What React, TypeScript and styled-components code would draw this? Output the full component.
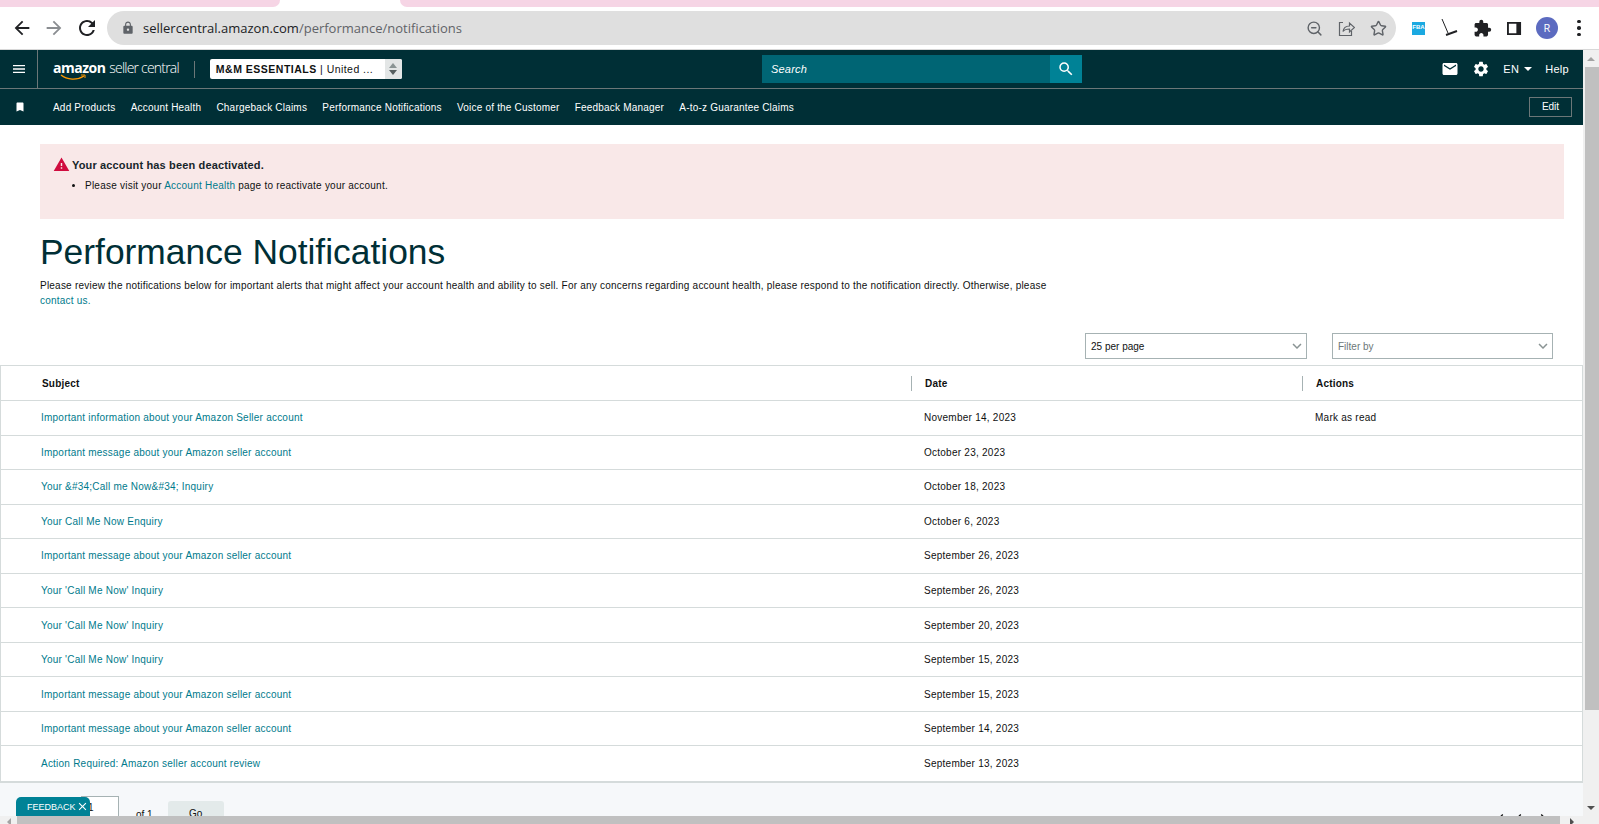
import styled, { createGlobalStyle } from "styled-components";
import { MdArrowBack, MdArrowForward, MdRefresh, MdLock, MdExtension, MdEmail, MdSettings, MdMenu, MdBookmark, MdSearch, MdWarning, MdKeyboardArrowDown, MdClose, MdChevronLeft, MdChevronRight } from "react-icons/md";
import { LuZoomOut, LuStar } from "react-icons/lu";

const rows = [
  ["Important information about your Amazon Seller account", "November 14, 2023", "Mark as read"],
  ["Important message about your Amazon seller account", "October 23, 2023", ""],
  ["Your &#34;Call me Now&#34; Inquiry", "October 18, 2023", ""],
  ["Your Call Me Now Enquiry", "October 6, 2023", ""],
  ["Important message about your Amazon seller account", "September 26, 2023", ""],
  ["Your 'Call Me Now' Inquiry", "September 26, 2023", ""],
  ["Your 'Call Me Now' Inquiry", "September 20, 2023", ""],
  ["Your 'Call Me Now' Inquiry", "September 15, 2023", ""],
  ["Important message about your Amazon seller account", "September 15, 2023", ""],
  ["Important message about your Amazon seller account", "September 14, 2023", ""],
  ["Action Required: Amazon seller account review", "September 13, 2023", ""],
];

const shortcuts = [
  "Add Products",
  "Account Health",
  "Chargeback Claims",
  "Performance Notifications",
  "Voice of the Customer",
  "Feedback Manager",
  "A-to-z Guarantee Claims",
];

const App = () => {
  return (
    <>
      <GlobalStyle />
      <Window>
        <TabStrip>
          <TabPink $width="280px" $side="right" />
          <TabGap />
          <TabPink $width="auto" $side="left" />
        </TabStrip>
        <BrowserBar>
          <BrowserNav>
            <MdArrowBack size={22} color="#202124" />
            <MdArrowForward size={22} color="#8a8d91" />
            <MdRefresh size={24} color="#202124" />
          </BrowserNav>
          <Omnibox>
            <MdLock size={14} color="#5f6368" />
            <Url>
              sellercentral.amazon.com<UrlPath>/performance/notifications</UrlPath>
            </Url>
            <OmniIcons>
              <LuZoomOut size={17} color="#5f6368" />
              <svg width="17" height="17" viewBox="0 0 17 17" fill="none" stroke="#5f6368" strokeWidth="1.2">
                <path d="M5 2.5H1.5v13h12V11" />
                <path d="M5 11.5c.5-3.5 3-5.5 6.5-5.5V3l5 4.5-5 4.5V9c-2.5 0-5 .5-6.5 2.5z" />
              </svg>
              <LuStar size={17} color="#5f6368" />
            </OmniIcons>
          </Omnibox>
          <Extensions>
            <FbaLogo>FBA</FbaLogo>
            <svg width="18" height="20" viewBox="0 0 18 20" fill="none" stroke="#202124">
              <path d="M2 1l6 14" strokeWidth="1" />
              <path d="M6 17l11-4" strokeWidth="2" />
            </svg>
            <MdExtension size={19} color="#202124" />
            <svg width="15" height="15" viewBox="0 0 16 16">
              <path fill="#202124" fillRule="evenodd" d="M0 1h15v14H0zM2 3v10h8V3z" />
            </svg>
            <Avatar>R</Avatar>
            <Kebab>
              <i />
              <i />
              <i />
            </Kebab>
          </Extensions>
        </BrowserBar>
        <Viewport>
          <Scroller>
            <Page>
              <TopNav>
                <NavMain>
                  <MenuCell>
                    <MdMenu size={16} color="#fff" />
                  </MenuCell>
                  <Logo>
                    <LogoWord>amazon</LogoWord>
                    <LogoSub>seller central</LogoSub>
                    <Smile width="26" height="7" viewBox="0 0 26 7" fill="none">
                      <path d="M1 1c6 5 16 5.500 23 1" stroke="#f90" strokeWidth="1.300" />
                      <path d="M21 1h4v3" stroke="#f90" strokeWidth="1" />
                    </Smile>
                  </Logo>
                  <LogoRule />
                  <AccountSelect>
                    <b>M&amp;M ESSENTIALS</b> | United ...
                    <Stepper>
                      <span />
                      <span />
                    </Stepper>
                  </AccountSelect>
                  <SearchBox>
                    <SearchLabel>Search</SearchLabel>
                    <SearchButton>
                      <MdSearch size={18} color="#fff" />
                    </SearchButton>
                  </SearchBox>
                  <NavRight>
                    <MdEmail size={18} color="#fff" />
                    <MdSettings size={18} color="#fff" />
                    <NavText>
                      EN <Caret />
                    </NavText>
                    <NavText>Help</NavText>
                  </NavRight>
                </NavMain>
                <NavShortcuts>
                  <MdBookmark size={12} color="#fff" />
                  <ShortcutList>
                    {shortcuts.map((name) => (
                      <Shortcut key={name}>{name}</Shortcut>
                    ))}
                  </ShortcutList>
                  <EditButton>Edit</EditButton>
                </NavShortcuts>
              </TopNav>
              <Content>
                <Alert>
                  <AlertTitle>
                    <MdWarning size={17} color="#d00c3f" />
                    Your account has been deactivated.
                  </AlertTitle>
                  <AlertList>
                    <li>
                      Please visit your <TextLink>Account Health</TextLink> page to reactivate your account.
                    </li>
                  </AlertList>
                </Alert>
                <Title>Performance Notifications</Title>
                <Intro>
                  Please review the notifications below for important alerts that might affect your account health and ability to sell. For any concerns regarding account health, please respond to the notification directly. Otherwise, please <TextLink>contact us.</TextLink>
                </Intro>
              </Content>
              <Filters>
                <SelectBox $width="222px">
                  25 per page
                  <MdKeyboardArrowDown size={18} color="#8a9494" />
                </SelectBox>
                <SelectBox $width="221px" $muted>
                  Filter by
                  <MdKeyboardArrowDown size={18} color="#8a9494" />
                </SelectBox>
              </Filters>
              <Table>
                <HeadRow>
                  <HeadCell>Subject</HeadCell>
                  <HeadCell $divider>Date</HeadCell>
                  <HeadCell $divider>Actions</HeadCell>
                </HeadRow>
                {rows.map(([subject, date, action], i) => (
                  <Row key={i}>
                    <SubjectCell>{subject}</SubjectCell>
                    <Cell>{date}</Cell>
                    <Cell>{action}</Cell>
                  </Row>
                ))}
              </Table>
              <Pager>
                <PageInput>1</PageInput>
                <OfLabel>of 1</OfLabel>
                <GoButton>Go</GoButton>
                <PagerArrows>
                  <MdChevronLeft size={16} />
                  <MdChevronLeft size={16} />
                  <MdChevronRight size={16} />
                </PagerArrows>
              </Pager>
            </Page>
            <VerticalBar>
              <BarArrow $dir="up" />
              <VerticalThumb />
              <BarArrow $dir="down" />
            </VerticalBar>
          </Scroller>
          <HorizontalBar>
            <SideArrow $dir="left" />
            <HorizontalThumb />
            <SideArrow $dir="right" />
          </HorizontalBar>
          <Feedback>
            FEEDBACK
            <MdClose size={13} color="#fff" />
          </Feedback>
        </Viewport>
      </Window>
    </>
  );
};

const GlobalStyle = createGlobalStyle`
  html, body {
    margin: 0;
    height: 100%;
    overflow: hidden;
    background: #fff;
  }
  * {
    box-sizing: border-box;
  }
`;

const Window = styled.div`
  width: 1599px;
  height: 824px;
  display: flex;
  flex-direction: column;
  overflow: hidden;
  font-family: "Liberation Sans", Arial, sans-serif;
  color: #0f1111;
`;

const TabStrip = styled.div`
  display: flex;
  height: 7px;
  flex: none;
`;

const TabPink = styled.div<{ $width: string; $side: "left" | "right" }>`
  width: ${({ $width }) => $width};
  flex: ${({ $width }) => ($width === "auto" ? 1 : "none")};
  background: #f6d5e5;
  border-bottom-${({ $side }) => $side}-radius: 7px;
`;

const TabGap = styled.div`
  width: 120px;
`;

const BrowserBar = styled.div`
  height: 43px;
  flex: none;
  display: flex;
  align-items: flex-start;
  padding-top: 4px;
  border-bottom: 1px solid #d8d8d8;
`;

const BrowserNav = styled.div`
  width: 107px;
  height: 34px;
  flex: none;
  display: flex;
  align-items: center;
  gap: 10px;
  padding-left: 11px;
`;

const Omnibox = styled.div`
  width: 1289px;
  height: 34px;
  flex: none;
  display: flex;
  align-items: center;
  padding: 0 9px 0 14px;
  border-radius: 17px;
  background: #dfdfdf;
`;

const Url = styled.div`
  margin-left: 8px;
  font-family: "Open Sans", sans-serif;
  font-size: 13px;
  color: #202124;
`;

const UrlPath = styled.span`
  color: #5f6368;
`;

const OmniIcons = styled.div`
  margin-left: auto;
  display: flex;
  align-items: center;
  gap: 15px;
`;

const Extensions = styled.div`
  flex: 1;
  height: 34px;
  display: flex;
  align-items: center;
  gap: 15px;
  padding-left: 16px;
`;

const FbaLogo = styled.div`
  width: 13px;
  height: 13px;
  background: #1ba9e1;
  color: #fff;
  font-size: 6px;
  font-weight: bold;
  line-height: 10px;
  text-align: center;
`;

const Avatar = styled.div`
  width: 22px;
  height: 22px;
  flex: none;
  margin-left: -1px;
  border-radius: 50%;
  background: #5c6bc0;
  color: #fff;
  font-family: "Open Sans", sans-serif;
  font-size: 11px;
  line-height: 22px;
  text-align: center;
`;

const Kebab = styled.div`
  display: flex;
  flex-direction: column;
  gap: 3px;
  margin-left: 4px;
  i {
    width: 3.5px;
    height: 3.5px;
    border-radius: 50%;
    background: #202124;
  }
`;

const Viewport = styled.div`
  position: relative;
  flex: 1;
  min-height: 0;
  display: flex;
  flex-direction: column;
`;

const Scroller = styled.div`
  flex: 1;
  min-height: 0;
  display: flex;
`;

const Page = styled.div`
  width: 1583px;
  flex: none;
  overflow: hidden;
`;

const TopNav = styled.div`
  background: #002f36;
  color: #fff;
`;

const NavMain = styled.div`
  position: relative;
  height: 39px;
  display: flex;
  align-items: center;
  border-bottom: 1px solid #6c7778;
`;

const MenuCell = styled.div`
  width: 38px;
  height: 38px;
  flex: none;
  display: flex;
  align-items: center;
  justify-content: center;
  border-right: 1px solid #6c7778;
`;

const Logo = styled.div`
  position: relative;
  margin-left: 15px;
  display: flex;
  align-items: baseline;
  gap: 4px;
  margin-top: -4px;
`;

const LogoWord = styled.span`
  font-family: "Open Sans", sans-serif;
  font-size: 14px;
  font-weight: 700;
  letter-spacing: -0.5px;
`;

const LogoSub = styled.span`
  font-family: "Open Sans", sans-serif;
  font-size: 14px;
  font-weight: 300;
  letter-spacing: -0.8px;
`;

const Smile = styled.svg`
  position: absolute;
  left: 7px;
  top: 16px;
`;

const LogoRule = styled.div`
  width: 1px;
  height: 17px;
  margin-left: 15px;
  background: #6c7778;
`;

const AccountSelect = styled.div`
  position: relative;
  width: 192px;
  height: 20px;
  margin-left: 15px;
  padding-left: 6px;
  border-radius: 2px;
  background: #fff;
  color: #0f1111;
  font-size: 10.5px;
  line-height: 20px;
  letter-spacing: 0.45px;
  b {
    letter-spacing: 0.5px;
  }
`;

const Stepper = styled.div`
  position: absolute;
  right: 0;
  top: 0;
  width: 17px;
  height: 20px;
  display: flex;
  flex-direction: column;
  align-items: center;
  justify-content: center;
  gap: 2px;
  border-radius: 0 2px 2px 0;
  background: #e3e6e6;
  span {
    width: 0;
    height: 0;
    border-left: 4px solid transparent;
    border-right: 4px solid transparent;
  }
  span:first-child {
    border-bottom: 5px solid #8a9494;
  }
  span:last-child {
    border-top: 5px solid #565f60;
  }
`;

const SearchBox = styled.div`
  position: absolute;
  left: 762px;
  top: 5px;
  width: 320px;
  height: 28px;
  display: flex;
  align-items: center;
  padding-left: 9px;
  background: #006574;
`;

const SearchLabel = styled.span`
  flex: 1;
  font-size: 11px;
  font-style: italic;
  letter-spacing: 0.2px;
`;

const SearchButton = styled.div`
  width: 32px;
  height: 28px;
  display: flex;
  align-items: center;
  justify-content: center;
  background: #008296;
`;

const NavRight = styled.div`
  margin-left: auto;
  display: flex;
  align-items: center;
  gap: 13px;
  padding-right: 14px;
`;

const NavText = styled.div`
  display: flex;
  align-items: center;
  gap: 5px;
  font-size: 11px;
  letter-spacing: 0.3px;
`;

const Caret = styled.span`
  width: 0;
  height: 0;
  border-left: 4px solid transparent;
  border-right: 4px solid transparent;
  border-top: 4px solid #fff;
`;

const NavShortcuts = styled.div`
  height: 36px;
  display: flex;
  align-items: center;
  padding: 0 11px 0 14px;
`;

const ShortcutList = styled.div`
  flex: 1;
  display: flex;
  gap: 15.2px;
  margin-left: 27px;
`;

const Shortcut = styled.span`
  font-size: 10px;
  letter-spacing: 0.2px;
  white-space: nowrap;
`;

const EditButton = styled.div`
  width: 43px;
  height: 20px;
  border: 1px solid #6c7778;
  font-size: 10px;
  line-height: 18px;
  text-align: center;
`;

const Content = styled.div`
  padding: 19px 19px 0 40px;
`;

const Alert = styled.div`
  height: 75px;
  padding: 12px 13px;
  background: #f9e8e8;
`;

const AlertTitle = styled.div`
  display: flex;
  align-items: center;
  gap: 2px;
  font-size: 11px;
  font-weight: bold;
  letter-spacing: 0.15px;
  color: #16252a;
`;

const AlertList = styled.ul`
  margin: 5px 0 0;
  padding-left: 32px;
  font-size: 10px;
  line-height: 15px;
  letter-spacing: 0.23px;
`;

const TextLink = styled.span`
  color: #007a8c;
`;

const Title = styled.h1`
  margin: 12px 0 0;
  font-size: 35.4px;
  font-weight: normal;
  line-height: 42px;
  color: #002f36;
`;

const Intro = styled.p`
  width: 1012px;
  margin: 5px 0 0;
  font-size: 10px;
  line-height: 15px;
  letter-spacing: 0.22px;
`;

const Filters = styled.div`
  display: flex;
  justify-content: flex-end;
  gap: 25px;
  margin-top: 25px;
  padding-right: 30px;
`;

const SelectBox = styled.div<{ $width: string; $muted?: boolean }>`
  width: ${({ $width }) => $width};
  height: 26px;
  display: flex;
  align-items: center;
  justify-content: space-between;
  padding: 0 0 0 5px;
  border: 1px solid #a6b2b3;
  color: ${({ $muted }) => ($muted ? "#6c7778" : "#0f1111")};
  font-size: 10px;
`;

const Table = styled.div`
  margin-top: 6px;
  border: 1px solid #d5dbdb;
  border-width: 1px 1px 2px 1px;
`;

const gridColumns = "910px 391px 1fr";

const HeadRow = styled.div`
  display: grid;
  grid-template-columns: ${gridColumns};
  height: 35px;
  align-items: center;
  border-bottom: 1px solid #d5dbdb;
`;

const HeadCell = styled.div<{ $divider?: boolean }>`
  height: 15px;
  padding-left: ${({ $divider }) => ($divider ? "13px" : "41px")};
  border-left: ${({ $divider }) => ($divider ? "1px solid #a6b2b3" : "none")};
  font-size: 10px;
  font-weight: bold;
  line-height: 15px;
  letter-spacing: 0.2px;
`;

const Row = styled.div`
  display: grid;
  grid-template-columns: ${gridColumns};
  height: 34.55px;
  align-items: center;
  border-bottom: 1px solid #d5dbdb;
  &:last-child {
    border-bottom: none;
  }
`;

const Cell = styled.div`
  padding-left: 13px;
  font-size: 10px;
  letter-spacing: 0.25px;
`;

const SubjectCell = styled(Cell)`
  padding-left: 40px;
  letter-spacing: 0.225px;
  color: #007a8c;
`;

const Pager = styled.div`
  height: 40px;
  display: flex;
  align-items: flex-start;
  padding: 13px 32px 0 81px;
  background: #f6f8fa;
  font-size: 10px;
`;

const PageInput = styled.div`
  width: 38px;
  height: 26px;
  padding: 5px 0 0 6px;
  border: 1px solid #a6b2b3;
  background: #fff;
`;

const OfLabel = styled.span`
  margin: 13px 0 0 17px;
`;

const GoButton = styled.div`
  width: 56px;
  height: 26px;
  margin: 5px 0 0 15px;
  border-radius: 3px;
  background: #e3eaea;
  line-height: 26px;
  text-align: center;
`;

const PagerArrows = styled.div`
  margin: 14px 0 0 auto;
  display: flex;
  gap: 2px;
  svg:last-child {
    margin-left: 6px;
  }
`;

const VerticalBar = styled.div`
  flex: 1;
  display: flex;
  flex-direction: column;
  background: #f0f0f0;
`;

const BarArrow = styled.div<{ $dir: "up" | "down" }>`
  height: 17px;
  flex: none;
  display: flex;
  align-items: center;
  justify-content: center;
  &::after {
    content: "";
    width: 0;
    height: 0;
    border-left: 4px solid transparent;
    border-right: 4px solid transparent;
    border-${({ $dir }) => ($dir === "up" ? "bottom" : "top")}: 4px solid ${({ $dir }) => ($dir === "up" ? "#a3a3a3" : "#505050")};
  }
`;

const VerticalThumb = styled.div`
  height: 643px;
  margin: 0 0 auto 2px;
  background: #c0c0c0;
`;

const HorizontalBar = styled.div`
  height: 8px;
  flex: none;
  display: flex;
  background: #f0f0f0;
`;

const SideArrow = styled.div<{ $dir: "left" | "right" }>`
  flex: ${({ $dir }) => ($dir === "left" ? "0 0 17px" : "0 0 23px")};
  padding-top: 2px;
  display: flex;
  justify-content: center;
  &::after {
    content: "";
    width: 0;
    height: 0;
    border-top: 4px solid transparent;
    border-bottom: 4px solid transparent;
    border-${({ $dir }) => ($dir === "left" ? "right" : "left")}: 4px solid ${({ $dir }) => ($dir === "left" ? "#a3a3a3" : "#505050")};
  }
`;

const HorizontalThumb = styled.div`
  width: 1543px;
  height: 8px;
  background: #c0c0c0;
`;

const Feedback = styled.div`
  position: absolute;
  left: 16px;
  bottom: 8px;
  width: 74px;
  height: 19px;
  display: flex;
  align-items: center;
  padding-left: 11px;
  border-radius: 5px 5px 0 0;
  background: #008296;
  color: #fff;
  font-size: 9px;
`;

export default App;
